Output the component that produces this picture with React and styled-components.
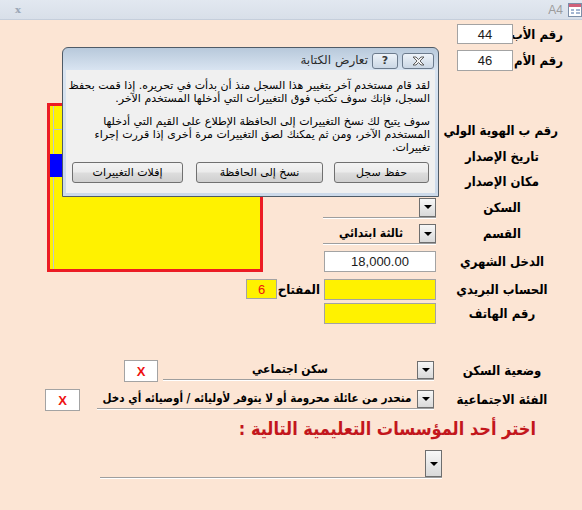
import React from 'react';
import styled, { createGlobalStyle } from 'styled-components';

const GlobalStyle = createGlobalStyle`
  html, body {
    margin: 0;
    padding: 0;
  }
  body {
    background: #fce5d4;
    font-family: Tahoma, "DejaVu Sans", "Liberation Sans", sans-serif;
    color: #000;
  }
`;

const boldFont = `"DejaVu Sans Condensed", "DejaVu Sans", sans-serif`;

const Page = styled.div`
  width: 582px;
  height: 510px;
  overflow: hidden;
  background: #fce5d4;
`;

const TopBar = styled.div`
  height: 19px;
  border-bottom: 1px solid #c5cedb;
  background: linear-gradient(#e2e8f0, #d8dfe9);
  display: flex;
  align-items: center;
  justify-content: space-between;
  padding-left: 15px;
`;

const CloseMark = styled.span`
  font-family: "DejaVu Serif", serif;
  font-weight: bold;
  font-size: 10px;
  color: #9ba7b6;
`;

const TabName = styled.div`
  display: flex;
  align-items: center;
  gap: 5px;
  font-family: "Liberation Sans", Arial, sans-serif;
  font-size: 12px;
  color: #9c9c9c;
`;

const Form = styled.div`
  position: relative;
  direction: rtl;
  height: 490px;
`;

const ParentRow = styled.div`
  display: flex;
  align-items: center;
  height: 20px;
  padding-right: 19px;
  margin-top: ${(p) => p.$top}px;
`;

const Label = styled.div`
  flex: none;
  width: ${(p) => p.$w}px;
  font-family: ${boldFont};
  font-stretch: condensed;
  font-weight: bold;
  font-size: 13px;
  white-space: nowrap;
  text-align: ${(p) => (p.$center ? 'center' : 'start')};
`;

const Box = styled.div`
  box-sizing: border-box;
  flex: none;
  width: ${(p) => p.$w}px;
  height: ${(p) => p.$h || 20}px;
  background: ${(p) => (p.$yellow ? '#fff200' : '#ffffff')};
  border: 1px solid #a3a3a3;
  display: flex;
  align-items: center;
  justify-content: center;
  font-family: "Liberation Sans", Arial, sans-serif;
  font-size: 13px;
  font-weight: ${(p) => (p.$bold ? 'bold' : 'normal')};
  color: ${(p) => (p.$red ? '#ee1111' : '#1a1a1a')};
  direction: ltr;
`;

const Middle = styled.div`
  display: flex;
  margin-top: 33px;
`;

const FieldGrid = styled.div`
  display: grid;
  grid-template-columns: 112px 113px;
  grid-template-rows: 27px 24px 26px 26px 27px 29px 26px 23px;
  column-gap: 10px;
  align-items: center;
  padding-top: 14px;
  padding-right: 24px;
`;

const LeftColumn = styled.div`
  flex: 1;
`;

const PictureBox = styled.div`
  position: relative;
  box-sizing: border-box;
  width: 216px;
  height: 169px;
  margin-right: 60px;
  border: 3px solid #ec1c24;
  background: #fff200;
`;

const GuideV = styled.div`
  position: absolute;
  left: 3px;
  top: 0;
  bottom: 0;
  width: 1px;
  background: #bcc6d2;
`;

const GuideH = styled.div`
  position: absolute;
  left: 3px;
  right: 0;
  top: 23px;
  height: 1px;
  background: #bcc6d2;
`;

const BlueMark = styled.div`
  position: absolute;
  left: 0;
  top: 48px;
  width: 12px;
  height: 23px;
  background: #0000ff;
`;

const KeyRow = styled.div`
  display: flex;
  align-items: center;
  height: 20px;
  margin-top: 7px;
  padding-right: 3px;
`;

const Combo = styled.div`
  box-sizing: border-box;
  flex: none;
  width: ${(p) => p.$w}px;
  height: ${(p) => p.$h}px;
  display: flex;
  align-items: flex-end;
  border-bottom: 1px solid #9e9e9e;
  box-shadow: 0 1px 0 #ffffff;
`;

const ComboButton = styled.div`
  box-sizing: border-box;
  flex: none;
  width: 17px;
  height: ${(p) => p.$h}px;
  border: 1px solid #6e6e6e;
  background: linear-gradient(#f7f7f7, #d9d9d9);
  display: flex;
  align-items: center;
  justify-content: center;

  &::after {
    content: '';
    border-left: 4px solid transparent;
    border-right: 4px solid transparent;
    border-top: 4px solid #000;
  }
`;

const ComboText = styled.div`
  flex: 1;
  min-width: 0;
  overflow: hidden;
  white-space: nowrap;
  text-align: center;
  font-family: ${boldFont};
  font-stretch: condensed;
  font-weight: bold;
  font-size: ${(p) => p.$size || 12}px;
  line-height: 19px;
  padding: 0 2px;
`;

const BottomRow = styled.div`
  display: flex;
  align-items: flex-start;
  height: 22px;
  margin-top: ${(p) => p.$top}px;
  padding-right: 24px;
`;

const RowLabel = styled(Label)`
  line-height: 22px;
  margin-left: 12px;
`;

const XBox = styled(Box)`
  margin-right: ${(p) => p.$gap}px;
  font-weight: bold;
`;

const Heading = styled.div`
  margin-top: 6px;
  padding-right: 46px;
  font-family: ${boldFont};
  font-stretch: condensed;
  font-size: 18px;
  line-height: 24px;
  font-weight: bold;
  color: #c3161c;
  white-space: nowrap;
`;

const SchoolRow = styled.div`
  margin-top: 8px;
  padding-right: 140px;
`;

const Dialog = styled.div`
  position: absolute;
  left: 62px;
  top: 23px;
  box-sizing: border-box;
  width: 377px;
  height: 150px;
  border: 1px solid #4f5b67;
  border-radius: 6px 6px 0 0;
  background: linear-gradient(#b8c9db, #d9e4f1 22px, #cddaea);
  display: flex;
  flex-direction: column;
`;

const DialogTitleBar = styled.div`
  height: 22px;
  flex: none;
  display: flex;
  align-items: center;
  gap: 4px;
  padding-right: 4px;
`;

const CaptionButton = styled.div`
  box-sizing: border-box;
  width: ${(p) => p.$w}px;
  height: 16px;
  margin-top: 3px;
  border: 1px solid #6c7b8d;
  border-radius: 3px;
  background: linear-gradient(#eef3f9, #cbd7e5);
  display: flex;
  align-items: center;
  justify-content: center;
  font-family: "DejaVu Sans", sans-serif;
  font-size: 11px;
  font-weight: bold;
  color: #3a3a3a;
`;

const DialogTitle = styled.div`
  font-size: 12px;
  color: #2b2b2b;
  margin-top: 2px;
  white-space: nowrap;
`;

const DialogBody = styled.div`
  flex: 1;
  margin: 0 3px 3px;
  background: #f0f0f0;
  padding: 9px 5px 0;
  font-size: 11px;
  line-height: 13px;
`;

const Para = styled.div`
  margin-top: ${(p) => p.$top || 0}px;
  white-space: nowrap;
`;

const DialogButtons = styled.div`
  display: flex;
  margin-top: 8px;
  padding-right: 1px;
`;

const DialogButton = styled.div`
  box-sizing: border-box;
  width: ${(p) => p.$w}px;
  height: 21px;
  margin-left: ${(p) => p.$gap || 0}px;
  border: 1px solid #707070;
  border-radius: 3px;
  background: linear-gradient(#f3f3f3 0%, #ebebeb 48%, #dddddd 52%, #cfcfcf 100%);
  display: flex;
  align-items: center;
  justify-content: center;
  font-size: 11px;
  white-space: nowrap;
`;

const FormIcon = () => (
  <svg width="14" height="14" viewBox="0 0 14 14">
    <rect x="0.5" y="0.5" width="13" height="13" fill="#fff" stroke="#7d8fa8" />
    <rect x="1" y="1" width="12" height="3" fill="#d0607a" />
    <path d="M3 7h3M3 10h3M8 7h4M8 10h4" stroke="#4a6fa5" strokeWidth="1" />
  </svg>
);

const CloseGlyph = () => (
  <svg width="13" height="10" viewBox="0 0 13 10">
    <path
      d="M1 1h3l2.5 2.5L9 1h3L8 5l4 4H9L6.5 6.5 4 9H1l4-4z"
      fill="#f4f4f4"
      stroke="#505050"
      strokeWidth="0.9"
    />
  </svg>
);

const ComboField = ({ w, h, text, size }) => (
  <Combo $w={w} $h={h}>
    <ComboButton $h={h - 2} />
    <ComboText $size={size}>{text}</ComboText>
  </Combo>
);

const fields = [
  { label: 'رقم ب الهوية الولي' },
  { label: 'تاريخ الإصدار' },
  { label: 'مكان الإصدار' },
  { label: 'السكن', control: <ComboField w={113} h={21} text="" /> },
  { label: 'القسم', control: <ComboField w={113} h={21} text="ثالثة ابتدائي" /> },
  { label: 'الدخل الشهري', control: <Box $w={112} $h={21}>18,000.00</Box> },
  { label: 'الحساب البريدي', control: <Box $w={112} $h={21} $yellow /> },
  { label: 'رقم الهاتف', control: <Box $w={112} $h={21} $yellow /> },
];

export default function App() {
  return (
    <Page>
      <GlobalStyle />
      <TopBar>
        <CloseMark>x</CloseMark>
        <TabName>
          A4
          <FormIcon />
        </TabName>
      </TopBar>

      <Form>
        <ParentRow $top={4}>
          <Label $w={50}>رقم الأب</Label>
          <Box $w={56}>44</Box>
        </ParentRow>
        <ParentRow $top={6}>
          <Label $w={50}>رقم الأم</Label>
          <Box $w={56} $h={21}>46</Box>
        </ParentRow>

        <Middle>
          <FieldGrid>
            {fields.map((f) => (
              <React.Fragment key={f.label}>
                <Label $w={112} $center>{f.label}</Label>
                <div>{f.control}</div>
              </React.Fragment>
            ))}
          </FieldGrid>
          <LeftColumn>
            <PictureBox>
              <GuideV />
              <GuideH />
              <BlueMark />
            </PictureBox>
            <KeyRow>
              <Label $w={43}>المفتاح</Label>
              <Box $w={31} $h={20} $yellow $red>6</Box>
            </KeyRow>
          </LeftColumn>
        </Middle>

        <BottomRow $top={35}>
          <RowLabel $w={112} $center>وضعية السكن</RowLabel>
          <ComboField w={271} h={20} text="سكن اجتماعي" />
          <XBox $w={34} $h={22} $red $gap={5}>X</XBox>
        </BottomRow>
        <BottomRow $top={7}>
          <RowLabel $w={112} $center>الفئة الاجتماعية</RowLabel>
          <ComboField
            w={337}
            h={20}
            size={11.5}
            text="منحدر من عائلة محرومة أو لا يتوفر لأوليائه / أوصيائه أي دخل"
          />
          <XBox $w={35} $h={22} $red $gap={17}>X</XBox>
        </BottomRow>

        <Heading>اختر أحد المؤسسات التعليمية التالية :</Heading>
        <SchoolRow>
          <ComboField w={342} h={29} text="" />
        </SchoolRow>

        <Dialog>
          <DialogTitleBar>
            <CaptionButton $w={32}>
              <CloseGlyph />
            </CaptionButton>
            <CaptionButton $w={26}>?</CaptionButton>
            <DialogTitle>تعارض الكتابة</DialogTitle>
          </DialogTitleBar>
          <DialogBody>
            <Para>
              لقد قام مستخدم آخر بتغيير هذا السجل منذ أن بدأت في تحريره. إذا قمت بحفظ
              <br />
              السجل، فإنك سوف تكتب فوق التغييرات التي أدخلها المستخدم الآخر.
            </Para>
            <Para $top={10}>
              سوف يتيح لك نسخ التغييرات إلى الحافظة الإطلاع على القيم التي أدخلها
              <br />
              المستخدم الآخر، ومن ثم يمكنك لصق التغييرات مرة أخرى إذا قررت إجراء
              <br />
              تغييرات.
            </Para>
            <DialogButtons>
              <DialogButton $w={95} $gap={11}>حفظ سجل</DialogButton>
              <DialogButton $w={127} $gap={13}>نسخ إلى الحافظة</DialogButton>
              <DialogButton $w={111}>إفلات التغييرات</DialogButton>
            </DialogButtons>
          </DialogBody>
        </Dialog>
      </Form>
    </Page>
  );
}
